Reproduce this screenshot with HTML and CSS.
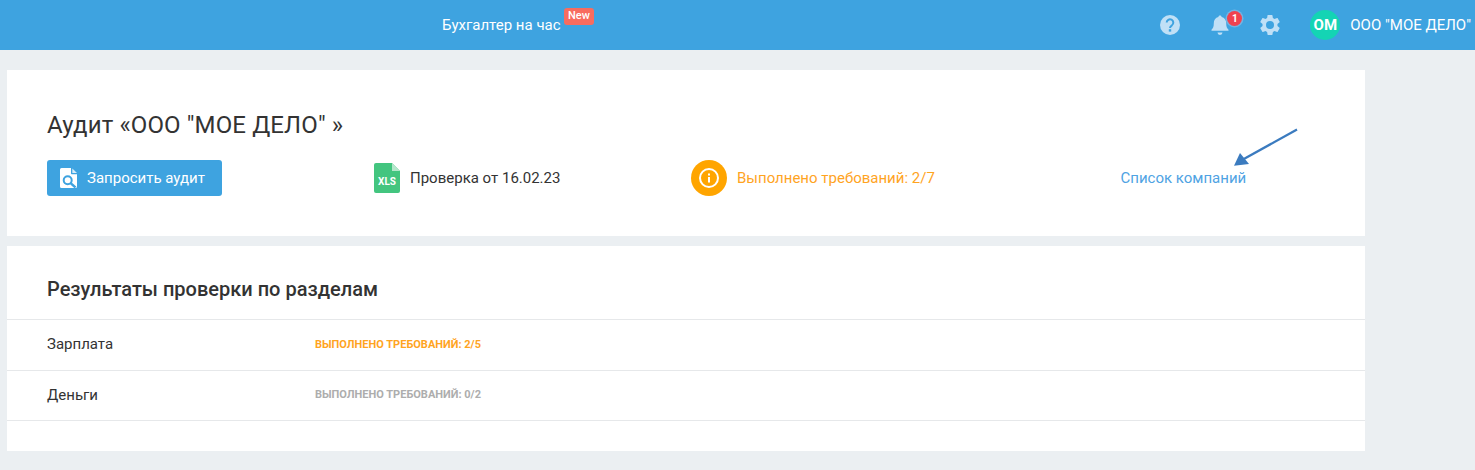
FILE: index.html
```html
<!DOCTYPE html>
<html lang="ru">
<head>
<meta charset="utf-8">
<title>Аудит</title>
<link rel="stylesheet" href="styles.css">
</head>
<body>
<header class="topbar">
  <div class="nav-item">
    <span class="nav-label">Бухгалтер на час</span>
    <span class="new-badge">New</span>
  </div>
  <div class="top-actions">
    <svg class="top-icon" viewBox="0 0 22 22" width="22" height="22"><circle cx="11" cy="11" r="10" fill="#c0e0f6"/><path d="M7.700 8.600a3.300 3.300 0 1 1 5.200 2.700c-1.200.8-1.900 1.300-1.900 2.600" fill="none" stroke="#3ea3e0" stroke-width="2"/><rect x="9.800" y="15.200" width="2.400" height="2.400" fill="#3ea3e0"/></svg>
    <div class="bell-wrap">
      <svg class="top-icon" viewBox="0 0 18 20" width="18" height="20"><path d="M9 0.5c1 0 1.600.7 1.600 1.500 3 .7 4.600 3.100 4.600 6.200 0 3.400.7 5 2.300 6.600v1H.5v-1C2.100 13.200 2.800 11.600 2.800 8.200c0-3.100 1.600-5.500 4.600-6.200C7.400 1.200 8 .5 9 .5z" fill="#c0e0f6"/><path d="M6.500 17.600h5a2.500 2.300 0 0 1-5 0z" fill="#c0e0f6"/></svg>
      <span class="bell-count">1</span>
    </div>
    <svg class="top-icon gear" viewBox="0 0 24 24" width="24" height="24"><path fill="#c0e0f6" fill-rule="evenodd" d="M19.430 12.980c.04-.32.07-.64.07-.98s-.03-.66-.07-.98l2.110-1.650c.19-.15.24-.42.12-.64l-2-3.460c-.12-.22-.39-.3-.61-.22l-2.490 1c-.52-.4-1.080-.73-1.690-.98l-.38-2.650A.488.488 0 0 0 14 2h-4c-.25 0-.46.18-.49.42l-.38 2.650c-.61.25-1.170.59-1.690.98l-2.490-1c-.23-.09-.49 0-.61.22l-2 3.460c-.13.22-.07.49.12.64l2.110 1.650c-.04.32-.07.65-.07.98s.03.66.07.98l-2.110 1.650c-.19.15-.24.42-.12.64l2 3.460c.12.22.39.3.61.22l2.490-1c.52.4 1.080.73 1.690.98l.38 2.650c.03.24.24.42.49.42h4c.25 0 .46-.18.49-.42l.38-2.650c.61-.25 1.170-.59 1.690-.98l2.490 1c.23.09.49 0 .61-.22l2-3.460c.12-.22.07-.49-.12-.64l-2.110-1.650zM12 16a4 4 0 1 1 0-8 4 4 0 0 1 0 8z"/></svg>
    <div class="user">
      <span class="avatar">ОМ</span>
      <span class="user-name">ООО "МОЕ ДЕЛО"</span>
    </div>
  </div>
</header>

<main class="content">
  <section class="card audit-card">
    <h1 class="audit-title">Аудит «ООО "МОЕ ДЕЛО" »</h1>
    <div class="audit-row">
      <button class="btn" type="button">
        <svg viewBox="0 0 18 20" width="18" height="20"><path d="M1.500 0H11v5.500a.8.8 0 0 0 .8.8H17v12.200a1.500 1.500 0 0 1-1.500 1.500h-14A1.500 1.500 0 0 1 0 18.500v-17A1.500 1.500 0 0 1 1.500 0z" fill="#fff"/><path d="M12.300 0.400L17 5.100h-4.700z" fill="#d8ecf9"/><circle cx="7.700" cy="12.200" r="4" fill="#fff" stroke="#3ea3e0" stroke-width="2"/><path d="M10.600 15.100L15.500 19.500" stroke="#3ea3e0" stroke-width="2.400"/></svg>
        <span>Запросить аудит</span>
      </button>
      <div class="xls">
        <svg viewBox="0 0 26 30" width="26" height="30"><path d="M2 0h16l8 8v20a2 2 0 0 1-2 2H2a2 2 0 0 1-2-2V2a2 2 0 0 1 2-2z" fill="#43c57f"/><path d="M18 0l8 8h-8z" fill="#b5e6cb"/><text x="13" y="22" class="xls-text" text-anchor="middle">XLS</text></svg>
        <span>Проверка от 16.02.23</span>
      </div>
      <div class="status">
        <svg viewBox="0 0 36 36" width="36" height="36"><circle cx="18" cy="18" r="18" fill="#ffa500"/><circle cx="18" cy="18" r="9" fill="none" stroke="#fff" stroke-width="2"/><rect x="17" y="17" width="2" height="5.500" fill="#fff"/><rect x="17" y="13.500" width="2" height="2" fill="#fff"/></svg>
        <span>Выполнено требований: 2/7</span>
      </div>
      <a class="companies" href="#">Список компаний</a>
    </div>
    <svg class="arrow" viewBox="0 0 66 40" width="66" height="40"><path d="M64 1.600L9 32" stroke="#3b7bbf" stroke-width="2.300" fill="none"/><path d="M1 37.700L16 36L7 25z" fill="#3b7bbf"/></svg>
  </section>

  <section class="card results-card">
    <h2 class="results-title">Результаты проверки по разделам</h2>
    <div class="result-row first">
      <span class="result-name">Зарплата</span>
      <span class="result-status warn">Выполнено требований: 2/5</span>
    </div>
    <div class="result-row">
      <span class="result-name">Деньги</span>
      <span class="result-status idle">Выполнено требований: 0/2</span>
    </div>
  </section>
</main>
</body>
</html>
```

FILE: styles.css
```css
* { box-sizing: border-box; }
html, body { margin: 0; padding: 0; }
body {
  background: #ebeff2;
  font-family: Roboto, "Noto Sans", sans-serif;
  color: #333;
  width: 1475px;
  height: 470px;
  overflow: hidden;
}
.topbar {
  height: 50px;
  background: #3ea3e0;
  display: flex;
  align-items: center;
  padding-left: 442px;
  color: #fff;
}
.nav-item { display: flex; align-items: center; position: relative; }
.nav-label { font-size: 15px; line-height: 50px; }
.new-badge {
  position: absolute;
  left: 122px;
  top: 8px;
  width: 30px;
  height: 17px;
  background: #f86c5f;
  border-radius: 3px;
  font-size: 11px;
  font-weight: 500;
  line-height: 16px;
  text-align: center;
}
.top-actions {
  margin-left: auto;
  display: flex;
  align-items: center;
  height: 50px;
}
.top-icon { display: block; }
.bell-wrap { position: relative; margin-left: 30px; width: 18px; height: 20px; }
.bell-count {
  position: absolute;
  left: 16px;
  top: -4px;
  width: 15px;
  height: 15px;
  border-radius: 50%;
  background: #f0424f;
  box-shadow: 0 0 0 1.500px #73b4e3;
  font-size: 10px;
  font-weight: 700;
  line-height: 15px;
  text-align: center;
}
.gear { margin-left: 29px; }
.user { display: flex; align-items: center; margin-left: 28px; margin-right: 4px; }
.avatar {
  width: 30px;
  height: 30px;
  border-radius: 50%;
  background: #14d4b4;
  font-size: 15px;
  font-weight: 700;
  line-height: 30px;
  text-align: center;
}
.user-name { font-size: 15px; margin-left: 10px; white-space: nowrap; }

.content {
  width: 1358px;
  margin-left: 7px;
  padding-top: 20px;
  display: flex;
  flex-direction: column;
  gap: 10px;
}
.card { background: #fff; }
.audit-card { height: 166px; padding: 41px 40px 0; position: relative; }
.audit-title {
  margin: 0;
  font-size: 24px;
  font-weight: 400;
  letter-spacing: .13px;
  line-height: 28px;
  color: #333;
}
.audit-row {
  display: flex;
  align-items: center;
  height: 36px;
  margin-top: 21px;
}
.btn {
  width: 175px;
  height: 36px;
  border: 0;
  border-radius: 3px;
  background: #3ea3e0;
  color: #fff;
  font-family: inherit;
  font-size: 15px;
  display: flex;
  align-items: center;
  padding: 0 0 0 13px;
  gap: 9px;
}
.xls {
  display: flex;
  align-items: center;
  gap: 10px;
  margin-left: 152px;
  width: 317px;
  font-size: 15px;
  color: #333;
}
.xls-text { font-family: Roboto, sans-serif; font-size: 10px; font-weight: 700; fill: #fff; }
.status {
  display: flex;
  align-items: center;
  gap: 10px;
  width: 429.500px;
  font-size: 15px;
  color: #ffa41f;
}
.companies { font-size: 15px; color: #4fa3e3; text-decoration: none; white-space: nowrap; }
.arrow { position: absolute; left: 1226px; top: 58px; }

.results-card { height: 205px; padding-top: 29px; }
.results-title {
  margin: 0 0 0 40px;
  font-size: 20px;
  font-weight: 500;
  line-height: 28px;
  color: #333;
}
.result-row {
  height: 50px;
  display: flex;
  align-items: center;
  padding: 0 0 2px 40px;
  border-bottom: 1px solid #e6e8ea;
}
.result-row.first {
  height: 52px;
  margin-top: 16px;
  border-top: 1px solid #e6e8ea;
}
.result-name { width: 268px; font-size: 15px; }
.result-status { font-size: 11px; font-weight: 700; text-transform: uppercase; }
.warn { color: #ffa41f; }
.idle { color: #adadad; }
```
